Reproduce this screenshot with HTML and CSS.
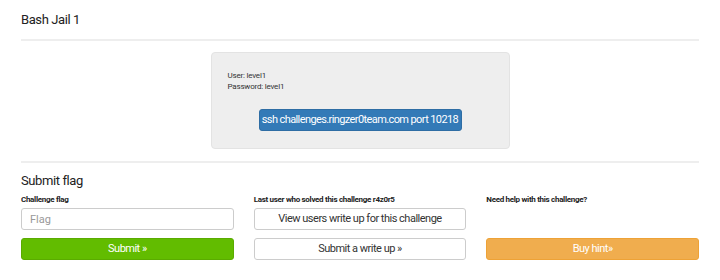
FILE: index.html
```html
<!DOCTYPE html>
<html lang="en">
<head>
  <meta charset="UTF-8">
  <title>Bash Jail 1</title>
  <link rel="stylesheet" href="styles.css">
</head>
<body>
  <div class="page">
    <h3 class="title">Bash Jail 1</h3>
    <hr>
    <div class="well">
      <p class="creds">User: level1<br>Password: level1</p>
      <div class="center">
        <span class="btn btn-blue">ssh challenges.ringzer0team.com port 10218</span>
      </div>
    </div>
    <hr class="sep">
    <h3 class="title sub">Submit flag</h3>
    <div class="grid">
      <label class="lbl">Challenge flag</label>
      <label class="lbl">Last user who solved this challenge r4z0r5</label>
      <label class="lbl">Need help with this challenge?</label>

      <input type="text" class="field" placeholder="Flag">
      <span class="btn btn-white">View users write up for this challenge</span>
      <span></span>

      <span class="btn btn-green">Submit &raquo;</span>
      <span class="btn btn-white">Submit a write up &raquo;</span>
      <span class="btn btn-orange">Buy hint&raquo;</span>
    </div>
  </div>
</body>
</html>
```

FILE: styles.css
```css
body { margin: 0; background: #fff; color: #333; font-family: Roboto, "Liberation Sans", sans-serif; }
.page { padding: 0 21px; }
.title { font-size: 13px; font-weight: normal; margin: 0; padding-top: 12px; line-height: 16px; color: #222; letter-spacing: -0.4px; }
.sub { padding-top: 10px; }
hr { border: 0; border-top: 2px solid #eee; margin: 11px 0 0; }
.sep { margin-top: 12px; }
.well { width: 265px; margin: 11px auto 0; background: #eee; border: 1px solid #e3e3e3; border-radius: 4px; padding: 17px 16px 17px; }
.creds { font-size: 8px; line-height: 11px; margin: 0 0 16px; letter-spacing: -0.2px; }
.center { text-align: center; }
.btn { display: inline-block; box-sizing: border-box; height: 22px; line-height: 20px; border: 1px solid transparent; border-radius: 3px; font-size: 11px; text-align: center; white-space: nowrap; letter-spacing: -0.5px; }
.btn-blue { background: #337ab7; border-color: #2e6da4; color: #fff; width: 203px; letter-spacing: -0.6px; }
.grid { display: grid; grid-template-columns: 1fr 1fr 1fr; column-gap: 20px; row-gap: 8px; margin-top: 6px; }
.lbl { font-size: 8px; font-weight: bold; line-height: 10px; margin-bottom: -5px; letter-spacing: -0.3px; color: #222; }
.field { box-sizing: border-box; height: 22px; border: 1px solid #ccc; border-radius: 3px; padding: 0 8px; font: 11px Roboto, "Liberation Sans", sans-serif; color: #555; }
.field::placeholder { color: #999; }
.btn-white { background: #fff; border-color: #ccc; color: #333; }
.btn-green { background: #62bc00; border-color: #5aab00; color: #fff; }
.btn-orange { background: #f0ad4e; border-color: #eea236; color: #fff; }
```
